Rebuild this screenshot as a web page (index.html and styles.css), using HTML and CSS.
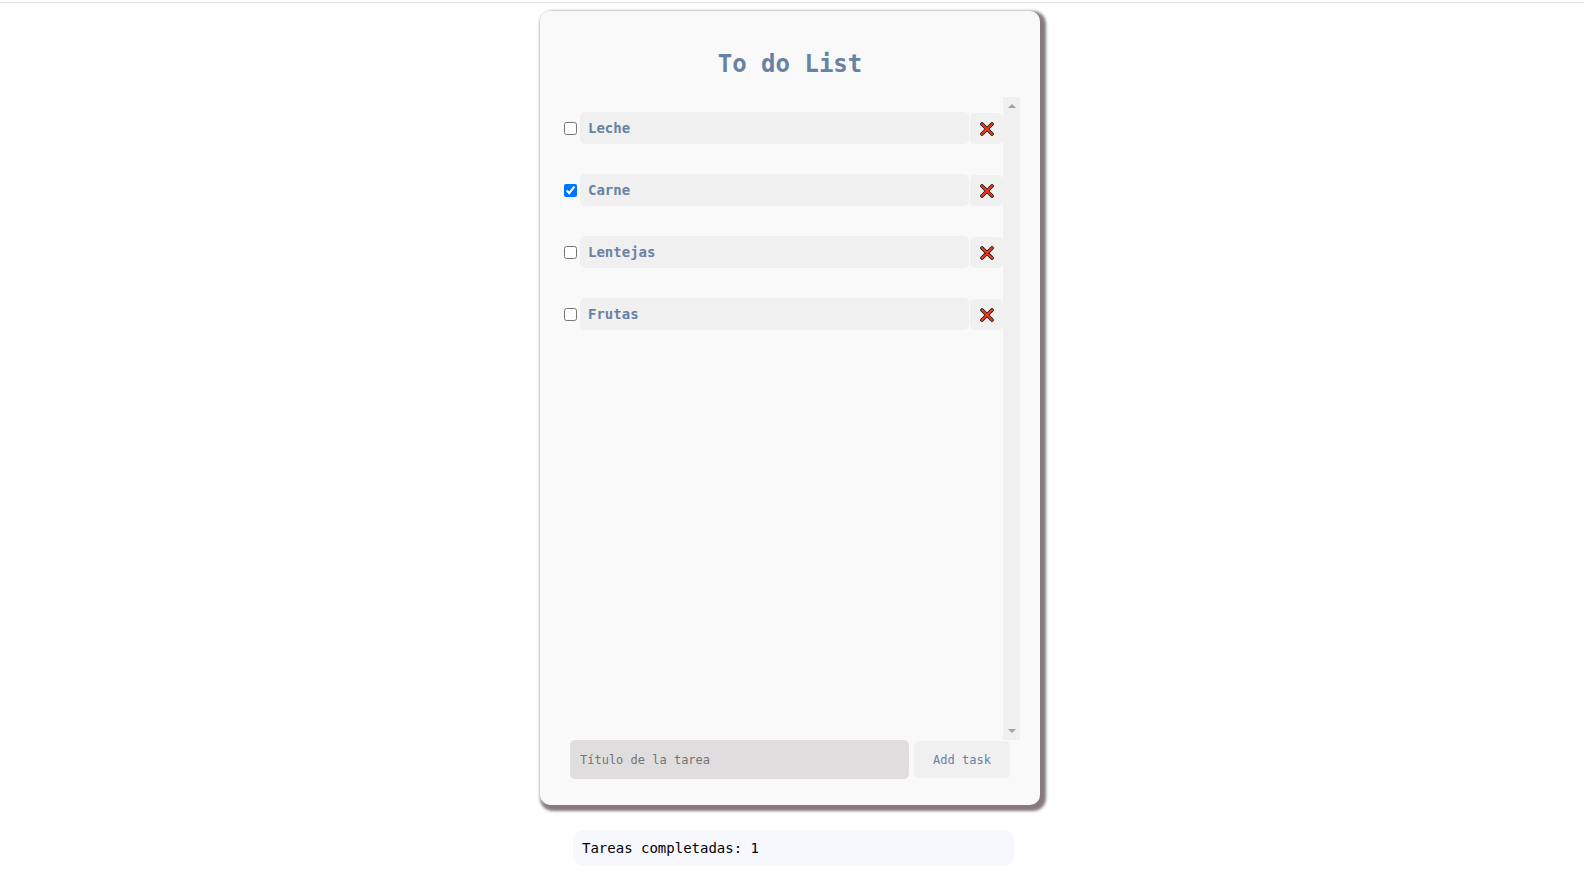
FILE: index.html
```html
<!DOCTYPE html>
<html lang="es">
<head>
<meta charset="utf-8">
<title>To do List</title>
<link rel="stylesheet" href="styles.css">
</head>
<body>
<svg class="symbols" aria-hidden="true">
  <symbol id="cross" viewBox="0 0 14 14">
    <path d="M2 2 12 12M12 2 2 12" fill="none" stroke="#1c1c1c" stroke-width="3.7" stroke-linecap="round"/>
    <path d="M2 2 12 12M12 2 2 12" fill="none" stroke="#f03a17" stroke-width="2" stroke-linecap="round"/>
  </symbol>
</svg>
<main class="page">
  <section class="card">
    <h1 class="title">To do List</h1>
    <div class="scroller">
      <ul class="tasks">
        <li class="task">
          <input class="check" type="checkbox" id="t1">
          <label class="name" for="t1">Leche</label>
          <button class="remove" type="button" aria-label="Eliminar Leche"><svg class="cross"><use href="#cross"/></svg></button>
        </li>
        <li class="task">
          <input class="check" type="checkbox" id="t2" checked>
          <label class="name" for="t2">Carne</label>
          <button class="remove" type="button" aria-label="Eliminar Carne"><svg class="cross"><use href="#cross"/></svg></button>
        </li>
        <li class="task">
          <input class="check" type="checkbox" id="t3">
          <label class="name" for="t3">Lentejas</label>
          <button class="remove" type="button" aria-label="Eliminar Lentejas"><svg class="cross"><use href="#cross"/></svg></button>
        </li>
        <li class="task">
          <input class="check" type="checkbox" id="t4">
          <label class="name" for="t4">Frutas</label>
          <button class="remove" type="button" aria-label="Eliminar Frutas"><svg class="cross"><use href="#cross"/></svg></button>
        </li>
      </ul>
      <div class="scrollbar" aria-hidden="true">
        <svg class="arrow" viewBox="0 0 8 4"><path d="M0 4 4 0 8 4z" fill="#a3a3a3"/></svg>
        <svg class="arrow" viewBox="0 0 8 4"><path d="M0 0 4 4 8 0z" fill="#a3a3a3"/></svg>
      </div>
    </div>
    <form class="add">
      <input class="field" type="text" placeholder="Título de la tarea" aria-label="Título de la tarea">
      <button class="submit" type="button">Add task</button>
    </form>
  </section>
  <p class="summary">Tareas completadas: 1</p>
</main>
</body>
</html>
```

FILE: styles.css
```css
* {
  box-sizing: border-box;
}

body {
  margin: 0;
  padding-top: 2px;
  background: #fff;
  font-family: Consolas, "DejaVu Sans Mono", monospace;
  font-size: 14px;
}

.symbols {
  display: none;
}

.page {
  display: flex;
  flex-direction: column;
  align-items: center;
  padding: 8px 4px 24px 0;
  border-top: 1px solid #e0e0e0;
}

.card {
  width: 100%;
  max-width: 500px;
  padding: 37px 20px 26px;
  border-radius: 10px;
  background: #f9f9f9;
  box-shadow: 3px 3px 3px 3px #87797f;
}

.title {
  margin: 0 0 17px;
  color: #6882a3;
  font-size: 24px;
  line-height: 32px;
  text-align: center;
}

.scroller {
  display: flex;
  min-height: 643px;
}

.tasks {
  display: flex;
  flex: 1;
  flex-direction: column;
  gap: 30px;
  margin: 0;
  padding: 15px 0 15px 4px;
  list-style: none;
}

.task {
  display: flex;
  align-items: center;
}

.check {
  width: 13px;
  height: 13px;
  margin: 0 3px 0 0;
}

.name {
  flex: 1;
  margin-right: 1px;
  padding: 0 8px;
  border-radius: 5px;
  background: #f0f0f0;
  color: #6882a3;
  font-weight: bold;
  line-height: 32px;
}

.remove {
  display: flex;
  align-items: center;
  justify-content: center;
  align-self: flex-end;
  width: 33px;
  height: 31px;
  padding: 0;
  border: 0;
  border-radius: 5px;
  background: #f0f0f0;
}

.cross {
  width: 14px;
  height: 14px;
}

.scrollbar {
  display: flex;
  flex-direction: column;
  align-items: center;
  justify-content: space-between;
  width: 17px;
  padding: 7px 0;
  background: #f0f0f0;
}

.arrow {
  width: 8px;
  height: 4px;
}

.add {
  display: flex;
  align-items: center;
  gap: 5px;
  padding: 0 10px;
}

.field {
  flex: 1;
  min-width: 0;
  height: 39px;
  padding: 0 10px;
  border: 0;
  border-radius: 5px;
  background: #dfdddd;
  font-family: inherit;
  font-size: 12px;
}

.field::placeholder {
  color: #757575;
}

.submit {
  width: 96px;
  height: 37px;
  padding: 0;
  border: 0;
  border-radius: 5px;
  background: #f0f0f0;
  color: #6882a3;
  font-family: inherit;
  font-size: 12px;
}

.summary {
  width: 100%;
  max-width: 441px;
  margin: 25px 0 0 7px;
  padding: 0 9px;
  border-radius: 10px;
  background: #f7f8fe;
  color: #000;
  line-height: 36px;
}
```
